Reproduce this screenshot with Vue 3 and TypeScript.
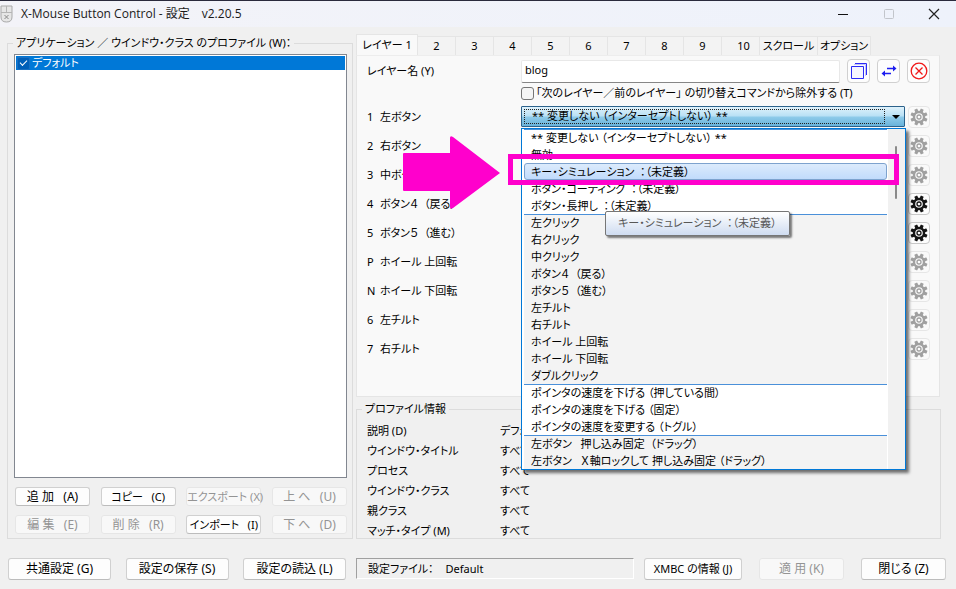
<script setup lang="ts">
import { ref } from 'vue'

interface PanelButton { label: string; disabled?: boolean; kana?: boolean }
interface Row { key: string; name: string; gear: boolean }
interface Option { text: string; alt: boolean; line?: boolean }

const tabs: string[] = ['レイヤー 1', '2', '3', '4', '5', '6', '7', '8', '9', '10', 'スクロール', 'オプション']
const activeTab = ref(0)

const profileButtons: PanelButton[] = [
  { label: '追 加   (A)' },
  { label: 'コピー   (C)', kana: true },
  { label: 'エクスポート (X)', disabled: true, kana: true },
  { label: '上 へ   (U)', disabled: true },
  { label: '編 集   (E)', disabled: true },
  { label: '削 除   (R)', disabled: true },
  { label: 'インポート   (I)', kana: true },
  { label: '下 へ   (D)', disabled: true },
]

const rows: Row[] = [
  { key: '1', name: '左ボタン', gear: false },
  { key: '2', name: '右ボタン', gear: false },
  { key: '3', name: '中ボタン', gear: false },
  { key: '4', name: 'ボタン４  （戻る）', gear: true },
  { key: '5', name: 'ボタン５  （進む）', gear: true },
  { key: 'P', name: 'ホイール 上回転', gear: false },
  { key: 'N', name: 'ホイール 下回転', gear: false },
  { key: '6', name: '左チルト', gear: false },
  { key: '7', name: '右チルト', gear: false },
]

const options: Option[] = [
  { text: '** 変更しない （インターセプトしない） **', alt: false, line: true },
  { text: '無効', alt: false },
  { text: 'キー・シミュレーション  ：（未定義）', alt: false },
  { text: 'ボタン・コーディング  ：（未定義）', alt: false },
  { text: 'ボタン・長押し  ：（未定義）', alt: false },
  { text: '左クリック', alt: true, line: true },
  { text: '右クリック', alt: true },
  { text: '中クリック', alt: true },
  { text: 'ボタン４  （戻る）', alt: true },
  { text: 'ボタン５  （進む）', alt: true },
  { text: '左チルト', alt: true },
  { text: '右チルト', alt: true },
  { text: 'ホイール 上回転', alt: true },
  { text: 'ホイール 下回転', alt: true },
  { text: 'ダブルクリック', alt: true },
  { text: 'ポインタの速度を下げる （押している間）', alt: false, line: true },
  { text: 'ポインタの速度を下げる （固定）', alt: false },
  { text: 'ポインタの速度を変更する （トグル）', alt: false },
  { text: '左ボタン   押し込み固定  （ドラッグ）', alt: true, line: true },
  { text: '左ボタン   Ｘ軸ロックして 押し込み固定 （ドラッグ）', alt: true },
]
const hovered = ref(2)

const info: [string, string][] = [
  ['説明 (D)', 'デフォルト'],
  ['ウインドウ・タイトル', 'すべて'],
  ['プロセス', 'すべて'],
  ['ウインドウ・クラス', 'すべて'],
  ['親クラス', 'すべて'],
  ['マッチ・タイプ (M)', 'すべて'],
]

const layerName = ref('blog')
const skipLayer = ref(false)
</script>

<template>
  <div class="window">
    <header class="titlebar">
      <svg class="app-icon" width="14" height="18" viewBox="0 0 14 18" aria-hidden="true">
        <path d="M1 1h11v11q0 5-5.500 5T1 12z" fill="#e6e6e6" stroke="#a9a9a9" />
        <path d="M1 7.500h11M6.500 1v6" stroke="#b5b5b5" fill="none" />
        <path d="M4.500 10l4 4m0-4l-4 4" stroke="#8a8a8a" fill="none" />
      </svg>
      <h1 class="title">X-Mouse Button Control - 設定<span>v2.20.5</span></h1>
      <div class="sys">
        <button type="button" aria-label="最小化"><svg width="12" height="12" viewBox="0 0 12 12"><path d="M1 6.500h10" stroke="#111" /></svg></button>
        <button type="button" aria-label="最大化" disabled><svg width="12" height="12" viewBox="0 0 12 12"><rect x="1.500" y="1.500" width="9" height="9" rx="1" fill="none" stroke="#c2c5cb" /></svg></button>
        <button type="button" aria-label="閉じる"><svg width="12" height="12" viewBox="0 0 12 12"><path d="M1 1l10 10M11 1L1 11" stroke="#222" stroke-width="1.200" /></svg></button>
      </div>
    </header>

    <main class="body">
      <section class="group profiles">
        <h2 class="legend">アプリケーション ／ ウインドウ・クラス のプロファイル (W)：</h2>
        <div class="list">
          <label class="list-item"><input type="checkbox" class="tick" checked />デフォルト</label>
        </div>
        <div class="button-grid">
          <button v-for="b in profileButtons" :key="b.label" type="button" class="btn" :class="{ kana: b.kana }" :disabled="b.disabled">{{ b.label }}</button>
        </div>
      </section>

      <div class="right">
        <nav class="tabs" role="tablist">
          <button
            v-for="(t, i) in tabs" :key="t" type="button" role="tab" class="tab"
            :class="{ active: i === activeTab, wide: i > 9, ten: i === 9 }"
            :aria-selected="i === activeTab" @click="activeTab = i"
          >{{ t }}</button>
        </nav>

        <section class="panel">
          <div class="name-row">
            <label class="name-label" for="layer">レイヤー名 (Y)</label>
            <input id="layer" v-model="layerName" class="name-input" type="text" />
            <div class="tools">
              <button type="button" class="tool" aria-label="コピー">
                <svg width="18" height="18" viewBox="0 0 18 18" fill="none" stroke="#2b2bf5">
                  <path d="M5 1.500h11.500V13" /><path d="M4 2.500h11.500V14" stroke="#c4c4fc" /><path d="M1.500 4.500h12v12h-12z" fill="#f6f6ff" />
                </svg>
              </button>
              <button type="button" class="tool" aria-label="入れ替え">
                <svg width="18" height="18" viewBox="0 0 18 18" fill="#1c1cf0" stroke="#1c1cf0">
                  <path d="M7 6.500h8M3 11.500h8" stroke-width="1.600" /><path d="M13 3.500l3.500 3-3.500 3zM5 8.500l-3.500 3 3.500 3z" stroke="none" />
                </svg>
              </button>
              <button type="button" class="tool" aria-label="消去">
                <svg width="18" height="18" viewBox="0 0 18 18" fill="none" stroke="#f01818" stroke-width="1.300">
                  <circle cx="9" cy="9" r="7.800" /><path d="M5.500 5.500l7 7m0-7l-7 7" />
                </svg>
              </button>
            </div>
          </div>
          <label class="skip"><input v-model="skipLayer" type="checkbox" class="box" />「次のレイヤー／前のレイヤー」 の切り替えコマンドから除外する   (T)</label>

          <div class="rows">
            <div v-for="(r, i) in rows" :key="r.key" class="row">
              <label class="row-label" :for="i === 0 ? 'action' : undefined"><span class="key">{{ r.key }}</span>{{ r.name }}</label>
              <div class="field">
                <template v-if="i === 0">
                  <select id="action" class="combo">
                    <option>{{ options[0].text }}</option>
                  </select>
                  <span class="focus" aria-hidden="true"></span>
                  <svg class="caret" width="8" height="4" viewBox="0 0 8 4" aria-hidden="true"><path d="M0 0h8L4 4z" /></svg>

                  <div class="popup">
                    <ul class="options" role="listbox">
                      <li
                        v-for="(o, n) in options" :key="n" role="option" class="option"
                        :class="{ alt: o.alt, line: o.line, hot: n === hovered }" :aria-selected="n === hovered"
                      >{{ o.text }}</li>
                    </ul>
                    <div class="scroll"><div class="thumb"></div></div>
                  </div>
                  <div class="tooltip" role="tooltip">{{ options[2].text }}</div>
                  <div class="marker"></div>
                  <svg class="arrow" width="98" height="74" viewBox="0 0 98 74" aria-hidden="true">
                    <path d="M1 17h46V2q0-3 3-1L97 37 50 72q-3 2-3-1V55H1q-1 0-1-1V18q0-1 1-1z" fill="#ff00cc" />
                  </svg>
                </template>
              </div>
              <button type="button" class="gear" :disabled="!r.gear" :aria-label="r.name + ' 設定'">
                <svg width="18" height="18" viewBox="-9 -9 18 18" aria-hidden="true">
                  <g fill="currentColor">
                    <rect v-for="a in 8" :key="a" x="-1.600" y="-8.600" width="3.200" height="4" rx="0.600" :transform="`rotate(${a * 45 + 22.5})`" />
                  </g>
                  <circle r="5" fill="#fbfbfb" stroke="currentColor" stroke-width="2.400" />
                  <circle r="2" fill="#fbfbfb" stroke="currentColor" stroke-width="1.300" />
                </svg>
              </button>
            </div>
          </div>
        </section>

        <section class="group info">
          <h2 class="legend">プロファイル情報</h2>
          <dl class="info-list">
            <div v-for="[k, v] in info" :key="k" class="info-row"><dt>{{ k }}</dt><dd>{{ v }}</dd></div>
          </dl>
        </section>
      </div>
    </main>

    <footer class="footer">
      <div class="foot-left">
        <button type="button" class="btn">共通設定 (G)</button>
        <button type="button" class="btn">設定の保存 (S)</button>
        <button type="button" class="btn">設定の読込 (L)</button>
      </div>
      <div class="status"><span>設定ファイル：</span><span>Default</span></div>
      <div class="foot-right">
        <button type="button" class="btn kana about">XMBC の情報 (J)</button>
        <button type="button" class="btn" disabled>適 用   (K)</button>
        <button type="button" class="btn">閉じる (Z)</button>
      </div>
    </footer>
  </div>
</template>

<style>
body { margin: 0; background: #f0f0f0; }
</style>

<style scoped>
* { box-sizing: border-box; }
.window {
  min-height: 100vh; display: flex; flex-direction: column; overflow: hidden;
  background: #f0f0f0; color: #000; border-top: 1px solid #2a2a3c;
  font: 11px/16px "Noto Sans", "Noto Sans CJK JP", sans-serif;
  font-feature-settings: "palt";
}
button, input, select { font: inherit; font-feature-settings: inherit; color: inherit; margin: 0; }
h1, h2, ul, dl, dd { margin: 0; padding: 0; font-size: 11px; font-weight: 400; }

.titlebar { height: 26px; display: flex; align-items: center; background: linear-gradient(90deg, #f3f3f8, #eef2fb); }
.app-icon { margin-right: 7px; }
.title { flex: 1; color: #1a1a1a; font-size: 12px; font-family: "Open Sans", "Noto Sans CJK JP", sans-serif; white-space: pre; }
.title span { margin-left: 12px; }
.sys { display: flex; }
.sys button { width: 46px; height: 26px; padding: 0; border: 0; background: none; display: flex; align-items: center; justify-content: center; }
.sys button:last-child { width: 44px; }

.body { flex: 1; display: grid; grid-template-columns: 346fr 585fr; gap: 3px; padding: 7px 15px 0 7px; }
.group { position: relative; border: 1px solid #dcdcdc; }
.legend { position: absolute; top: -9px; left: 5px; padding: 0 3px; background: #f0f0f0; white-space: pre; }

.profiles { margin-top: 9px; padding: 10px 5px 4px 6px; display: flex; flex-direction: column; }
.list { flex: 1; background: #fff; border: 1px solid #828790; padding: 1px; }
.list-item { display: flex; align-items: center; height: 14px; padding-left: 1px; background: #0078d7; color: #fff; }
.tick { appearance: none; width: 13px; height: 13px; margin-right: 2px; border-radius: 2px; background: #005fb8; border: 1px solid #1b6fc0; display: grid; place-items: center; }
.tick::after { content: ""; width: 6px; height: 3px; border: solid #fff; border-width: 0 0 1px 1px; transform: rotate(-45deg); margin-top: -2px; }
.button-grid { display: grid; grid-template-columns: repeat(4, 75px); justify-content: space-between; gap: 9px 0; margin-top: 9px; padding-left: 1px; }
.btn {
  height: 19px; padding: 0; white-space: pre; background: #fdfdfd; font-size: 12px; line-height: 16px;
  border: 1px solid #d0d0d0; border-bottom-color: #bcbcbc; border-radius: 3px;
}
.btn.kana { font-size: 11px; }
.btn:disabled { color: #949494; background: #f8f8f8; border-color: #e6e6e6; }

.right { display: flex; flex-direction: column; min-width: 0; }
.tabs { display: flex; align-items: flex-end; height: 21px; }
.tab { width: 38px; height: 19px; padding: 0; background: #f3f3f3; border: 1px solid #e5e5e5; border-left-width: 0; border-bottom: 0; white-space: pre; }
.tab.active { width: 62px; height: 21px; background: #f9f9f9; border-left-width: 1px; }
.tab.ten { padding-left: 6px; }
.tab.wide { width: 58px; }
.tab.wide:last-child { width: 53px; }
.panel { flex: 1; margin-right: 1px; background: #f9f9f9; border: 1px solid #e5e5e5; border-top-color: #ededed; padding: 3px 9px 32px 10px; display: flex; flex-direction: column; }
.name-row { display: flex; align-items: center; height: 24px; }
.name-label { width: 154px; }
.name-input { flex: 1; min-width: 0; height: 23px; padding: 0 3px 4px; background: #fff; border: 1px solid #e8e8e8; border-bottom-color: #868686; border-radius: 2px; outline: 0; }
.tools { display: flex; gap: 7px; margin-left: 7px; }
.tool { width: 23px; height: 24px; padding: 0; display: grid; place-items: center; background: #fdfdfd; border: 1px solid #d0d0d0; border-radius: 4px; }
.skip { display: flex; align-items: center; margin: 1px 0 0 154px; height: 18px; white-space: pre; }
.box { appearance: none; width: 13px; height: 13px; margin-right: 2px; background: #f5f5f5; border: 1px solid #767676; border-radius: 3px; }

.rows { flex: 1; display: flex; flex-direction: column; }
.row { flex: 1; display: flex; align-items: center; }
.row-label { width: 154px; white-space: pre; display: flex; }
.key { width: 13px; }
.field { position: relative; flex: 1; min-width: 0; height: 21px; }
.gear { width: 22px; height: 22px; margin-left: 3px; padding: 0; display: grid; place-items: center; background: #fdfdfd; border: 1px solid #c8c8c8; border-radius: 4px; color: #151515; }
.gear:disabled { color: #a0a0a0; background: #fafafa; border-color: #e6e6e6; }

.combo {
  appearance: none; width: 100%; height: 21px; padding: 0 20px 2px 10px; outline: 0; white-space: pre;
  border: 1px solid #2c628b; border-radius: 1px;
  background: linear-gradient(#e0f2fb 0, #b8e0f5 48%, #8fcbea 52%, #68b3db 100%);
}
.focus { position: absolute; inset: 3px 20px 3px 3px; border: 1px dotted #222; pointer-events: none; }
.caret { position: absolute; right: 5px; top: 9px; pointer-events: none; }

.popup { position: absolute; z-index: 2; top: 22px; left: 0; right: -1px; display: flex; background: #f1f1f1; border: 1px solid #0078d7; box-shadow: 3px 3px 3px rgba(0, 0, 0, .55); }
.options { flex: 1; list-style: none; background: #fff; border-left: 2px solid #fff; border-right: 1px solid #fff; }
.option { height: 17px; padding-left: 7px; white-space: pre; line-height: 17px; }
.option.alt { background: #f3f3f3; }
.option.line { box-shadow: inset 0 1px #4a90d9; }
.option.hot { border: 1px solid #7da2ce; border-radius: 3px; line-height: 15px; padding-left: 6px; background: linear-gradient(#dcebfc, #c1dbfc); }
.scroll { width: 17px; padding: 17px 7px; }
.thumb { width: 2px; height: 53px; background: #8a8a8a; border-radius: 1px; }
.tooltip { position: absolute; z-index: 3; top: 105px; left: 84px; padding: 3px 12px 4px; white-space: pre; color: #575757; border: 1px solid #767676; border-radius: 2px; background: linear-gradient(#fff, #cfdcf0); box-shadow: 2px 2px 2px rgba(0, 0, 0, .5); }
.marker { position: absolute; z-index: 4; top: 48px; left: -13px; right: 6px; height: 31px; border: 5px solid #ff00cc; pointer-events: none; }
.arrow { position: absolute; z-index: 4; top: 30px; left: -118px; pointer-events: none; }

.info { margin-top: 12px; padding: 11px 10px 0; height: 130px; }
.info-row { display: flex; line-height: 19px; height: 20px; }
.info-row dt { width: 133px; }

.footer { display: grid; grid-template-columns: 338fr 278fr 302fr; gap: 10px; padding: 19px 10px 9px 8px; height: 50px; }
.foot-left, .foot-right { display: flex; justify-content: space-between; }
.footer .btn { height: 22px; width: 103px; }
.foot-right .btn { width: 85px; }
.foot-right .about { width: 98px; }
.status { display: flex; align-items: center; gap: 12px; height: 21px; padding: 0 11px; border: 1px solid #fff; border-top-color: #a0a0a0; border-left-color: #a0a0a0; }
</style>
